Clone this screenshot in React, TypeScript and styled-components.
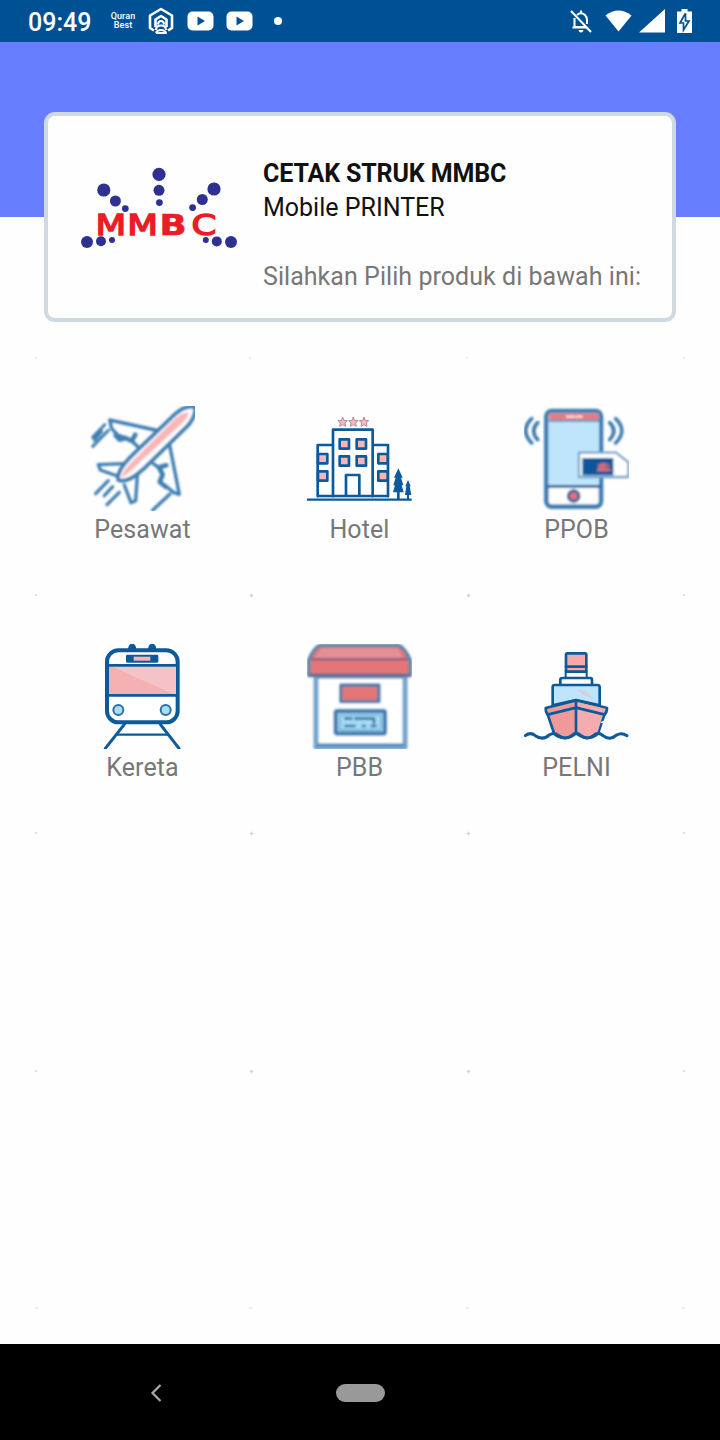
import React from "react";
import styled, { createGlobalStyle } from "styled-components";

const NAVY = "#0b5a9b";
const STEEL = "#3f7fb2";
const PINK = "#f7b6b6";
const SKY = "#bfe5fa";

const GlobalStyle = createGlobalStyle`
  * { box-sizing: border-box; }
  body { margin: 0; background: #fefefe; font-family: Roboto, "Noto Sans", sans-serif; }
`;

const Screen = styled.div`
  width: 720px;
  height: 1440px;
  display: flex;
  flex-direction: column;
  overflow: hidden;
  background: #fefefe;
`;

const StatusBar = styled.header`
  height: 42px;
  flex: none;
  display: flex;
  align-items: center;
  justify-content: space-between;
  padding: 0 28px;
  background: #005193;
  color: #fff;
`;

const StatusGroup = styled.div<{ $gap: number }>`
  display: flex;
  align-items: center;
  gap: ${(p) => p.$gap}px;
  svg { display: block; flex: none; }
`;

const Clock = styled.span`
  width: 63px;
  height: 42px;
  font-size: 25px;
  font-weight: 500;
  line-height: 45px;
  white-space: nowrap;
`;

const QuranBadge = styled.span`
  display: flex;
  flex-direction: column;
  align-items: center;
  width: 26px;
  margin: 0 11px 0 7px;
  font: 500 9px/9px Roboto, sans-serif;
  letter-spacing: 0.1px;
`;

const AppMark = styled.svg`
  margin-left: -11px;
  margin-right: 1px;
`;

const Signal = styled.svg`
  margin-left: -5px;
`;

const Dot = styled.span`
  width: 8px;
  height: 8px;
  margin-left: 9px;
  border-radius: 50%;
  background: #fff;
`;

const Banner = styled.div`
  height: 175px;
  flex: none;
  background: #667eff;
`;

const InfoCard = styled.section`
  position: relative;
  flex: none;
  display: flex;
  height: 210px;
  margin: -105px 44px 0;
  padding: 40px 0 0 28px;
  border: 4px solid #cfdae0;
  border-radius: 11px;
  background: #fefefe;
`;

const CardText = styled.div`
  display: flex;
  flex-direction: column;
  margin: 1px 0 0 19px;
  white-space: nowrap;
`;

const Line = styled.p<{ $color: string; $bold?: boolean; $gap?: number; $track?: number }>`
  margin: ${(p) => p.$gap ?? 0}px 0 0;
  font-size: 25px;
  line-height: 34px;
  font-weight: ${(p) => (p.$bold ? 700 : 400)};
  letter-spacing: ${(p) => p.$track ?? 0}px;
  color: ${(p) => p.$color};
`;

const Grid = styled.main`
  flex: 1;
  min-height: 0;
  display: grid;
  grid-template-columns: repeat(3, 217px);
  grid-template-rows: repeat(4, 238px);
  grid-auto-rows: 2px;
  align-content: start;
  padding: 35px 35px 0 34px;
`;

const Tile = styled.div`
  position: relative;
  display: flex;
  flex-direction: column;
  align-items: center;
  padding-top: 49px;
  &::before, &:nth-child(3n)::after {
    content: "";
    position: absolute;
    top: -2px;
    left: -2px;
    width: 5px;
    height: 5px;
    background:
      linear-gradient(#d4d4d4, #d4d4d4) 2px 1px / 1px 3px no-repeat,
      linear-gradient(#d4d4d4, #d4d4d4) 1px 2px / 3px 1px no-repeat,
      linear-gradient(#ececec, #ececec) 0 2px / 5px 1px no-repeat,
      linear-gradient(#ececec, #ececec) 2px 0 / 1px 5px no-repeat,
      linear-gradient(#f0f0f0, #f0f0f0) 1px 1px / 3px 3px no-repeat;
  }
  &:nth-child(3n + 1)::before, &:nth-child(3n)::after {
    left: 1px;
    width: 2px;
    background: #dedede;
    height: 2px;
    top: -1px;
  }
  &:nth-child(3n)::after { left: auto; right: 0; }
  &:nth-child(-n + 3)::before, &:nth-child(-n + 3)::after {
    height: 2px;
    width: 2px;
    top: 0;
    background: #eeeeee;
  }
`;

const TileLabel = styled.span`
  margin-top: 3px;
  font-size: 25px;
  line-height: 32px;
  letter-spacing: 0.1px;
  color: #777;
`;

const GridEnd = styled(Tile)`
  height: 2px;
  padding: 0;
  &&::before, &&::after {
    top: -2px;
    width: 3px;
    height: 2px;
    background: #ececec;
  }
`;

const NavBar = styled.footer`
  height: 96px;
  flex: none;
  display: flex;
  align-items: center;
  padding: 1px 0 0 149px;
  background: #000;
`;

const HomePill = styled.span`
  width: 49px;
  height: 18px;
  margin-left: 173px;
  border-radius: 9px;
  background: #999;
`;

function Art({ top, soft, children }: { top: number; soft?: boolean; children: React.ReactNode }) {
  return (
    <svg width="105" height="105" viewBox={`31 ${top} 315 315`} fill="none" strokeLinejoin="round" strokeLinecap="round">
      <defs>
        <filter id="soft" x="-5%" y="-5%" width="110%" height="110%">
          <feGaussianBlur stdDeviation="2.8" />
        </filter>
      </defs>
      <g filter={soft ? "url(#soft)" : undefined}>{children}</g>
    </svg>
  );
}

const Plane = () => (
  <Art top={32} soft>
    <g stroke={STEEL} strokeWidth="10">
      <path d="M240 107L90 74L96 100L114 119L140 128M160 140L178 158" />
      <path d="M108 120L120 133L137 128L156 137L167 118" strokeWidth="14" />
      <path d="M75 88L39 126M86 105L39 153M66 108L44 134" strokeWidth="9" />
      <path d="M269 145L299 297L283 292L258 272M237 217L221 205" />
      <path d="M260 210L238 216L249 238L240 260L259 275" strokeWidth="14" />
      <path d="M135 205L56 208L62 224L113 242M134 269L154 322L168 316L173 240" />
      <path d="M86 256L48 295M99 274L74 301M119 291L82 328M271 296L219 345" />
      <path d="M116 254C111 232 130 207 160 178L288 55Q320 28 346 36Q349 62 325 90L190 222Q143 265 116 254Z" fill="#fff" strokeWidth="12" />
    </g>
    <path d="M125 247Q129 224 169 187L286 71Q308 51 325 51Q332 59 309 82L178 203Q146 236 125 247Z" fill="#f9b5b6" />
  </Art>
);

const HOTEL_WINDOWS = [[127, 130], [178, 130], [127, 181], [178, 181], [62, 174], [62, 226], [243, 174], [243, 226]];

const Hotel = () => (
  <Art top={32}>
    <g stroke={NAVY} strokeWidth="8">
      <path d="M31 313H342" strokeWidth="7" />
      <path d="M63 303V149H108M229 149H274V303M109 303V103H228V303M63 302H274M148 300V239H188V300" />
      {HOTEL_WINDOWS.map(([x, y]) => (
        <rect key={`${x}-${y}`} x={x + 2} y={y + 2} width="28" height="28" fill={PINK} />
      ))}
    </g>
    <path d="M305 219L318 247H313L320 270H315L321 291H309V312H301V291H289L295 270H290L297 247H292ZM334 254L342 273H339L344 299H337V312H331V299H325L329 273H326Z" fill={NAVY} />
    {[138, 170, 202].map((x) => (
      <path key={x} transform={`translate(${x} 80)`} d="M0 -14L4 -5L14 -4L7 3L9 13L0 8L-9 13L-7 3L-14 -4L-4 -5Z" fill="#f6b9bb" stroke="#b58b9b" strokeWidth="3" />
    ))}
  </Art>
);

const Phone = () => (
  <Art top={32} soft>
    <rect x="98" y="47" width="164" height="287" rx="16" fill="#fff" stroke={STEEL} strokeWidth="14" />
    <path d="M105 76H256V273H105Z" fill={SKY} />
    <path d="M107 54H255V75H107Z" fill="#e07d86" />
    <path d="M107 77H255" stroke={STEEL} strokeWidth="5" />
    <path d="M160 64H182M190 64H204" stroke="#fbdfe2" strokeWidth="7" />
    <path d="M104 273H257" stroke={NAVY} strokeWidth="8" />
    <circle cx="180" cy="302" r="16" fill="#e7717a" stroke="#286195" strokeWidth="9" />
    <g stroke={STEEL} strokeWidth="11">
      <path d="M54 70Q18 106 54 143M72 82Q48 106 72 133" />
      <path d="M306 70Q343 106 306 143M288 82Q313 106 288 133" />
    </g>
    <path d="M196 172H307L344 201V245H196Z" fill="#fff" stroke="#75a3c8" strokeWidth="7" />
    <path d="M206 188H299V240H206Z" fill="#105799" />
    <path d="M253 205H288V225H253Z" fill="#9d6182" />
    <path d="M255 224L265 205M267 224L274 205M253 225H288" stroke="#df707d" strokeWidth="6" />
  </Art>
);

const Train = () => (
  <Art top={27}>
    <path d="M145 42Q147 26 158 26Q168 26 170 42M205 42Q207 26 218 26Q228 26 230 42" fill={NAVY} />
    <rect x="82" y="46" width="212" height="216" rx="34" fill="#fff" stroke={NAVY} strokeWidth="12" />
    <path d="M88 94H289V180H88Z" fill="#f5b1b2" />
    <path d="M88 94H289V180L100 97Z" fill="#f5c3c7" />
    <path d="M88 91H289M88 181H289" stroke={NAVY} strokeWidth="8" />
    <rect x="139" y="59" width="97" height="24" rx="4" fill={NAVY} />
    <rect x="162" y="65" width="50" height="12" fill={PINK} />
    <g fill="#a9dcf8" stroke="#2d70a7" strokeWidth="6">
      <circle cx="116" cy="225" r="15" />
      <circle cx="258" cy="225" r="15" />
    </g>
    <g stroke={NAVY} strokeWidth="9">
      <path d="M134 268L77 340M242 268L298 340" />
      <path d="M113 299H264" strokeWidth="7" />
    </g>
  </Art>
);

const Kiosk = () => (
  <Art top={27} soft>
    <path d="M58 117H325V337H58Z" fill="#fff" stroke="#71a4cc" strokeWidth="15" />
    <path d="M65 127H317M64 329H318" stroke={STEEL} strokeWidth="7" />
    <path d="M72 31H304Q322 34 341 76V121H36V76Q54 34 72 31Z" fill="#e47477" stroke="#6088ab" strokeWidth="11" />
    <path d="M74 39H303L319 68H55Z" fill="#e49093" />
    <path d="M47 73H331M38 121H340" stroke="#765f88" strokeWidth="6" />
    <path d="M132 150H247V200H132Z" fill="#e47477" stroke="#477eab" strokeWidth="10" />
    <rect x="117" y="228" width="148" height="68" rx="5" fill="#a8d9f3" stroke={STEEL} strokeWidth="13" />
    <path d="M131 241H252V285H131Z" stroke="#6daed5" strokeWidth="4" />
    <path d="M146 251H164M176 251H232M232 251V264M146 273H174M198 273H205M224 273H237" stroke="#347bad" strokeWidth="8" />
  </Art>
);

const Ship = () => (
  <Art top={27}>
    <g stroke={NAVY} strokeWidth="8">
      <rect x="157" y="55" width="61" height="75" rx="4" fill="#f4aaaa" />
      <path d="M159 112H216V128H159Z" fill="#fff" stroke="none" />
      <path d="M157 95H218M157 110H218" />
      <path d="M140 150V134Q140 129 146 129H230Q235 129 235 135V150" fill="#fff" />
      <path d="M117 211V156Q117 150 123 150H251Q258 150 258 156V211L187 195Z" fill={SKY} />
      <path d="M190 166H215L237 192L213 182Z" fill="#d7ced9" stroke="none" />
      <path d="M96 219L187 196L280 219Q280 233 272 239L253 296Q237 309 222 309Q204 309 187 295Q173 309 153 309Q136 309 122 297L102 239Q95 230 96 219Z" fill="#f0999a" />
      <path d="M190 201L276 221L268 239L251 293Q235 306 220 304L190 290Z" fill="#f5acae" stroke="none" />
      <path d="M187 197V293M102 239L187 218L273 239" />
      <path d="M35 302Q50 290 65 302Q88 318 108 299Q121 290 137 303Q155 316 174 302Q187 288 202 302Q220 316 239 302Q254 288 268 302Q288 318 309 300Q324 291 340 302" strokeWidth="9" />
    </g>
    <path d="M265 262L274 259" stroke="#fff" strokeWidth="6" />
  </Art>
);

const LOGO_DOTS = [
  [89, 19.4, 6.6], [89, 35.3, 5.5], [89.4, 47.6, 3.4],
  [33.8, 35, 6.6], [45.4, 46, 5.5], [55.3, 53.6, 3.4],
  [144, 34, 6.6], [132.3, 44.5, 5.5], [122.6, 52.6, 3.4],
  [17, 87, 6], [31, 86.2, 5], [42, 85, 3],
  [161, 87, 6], [146.8, 86.4, 5], [135.8, 85, 3],
];

const Logo = () => (
  <svg width="168" height="100" viewBox="6 0 168 100">
    {LOGO_DOTS.map(([x, y, r]) => (
      <circle key={`${x}-${y}`} cx={x} cy={y} r={r} fill="#2e3192" />
    ))}
    <g transform="scale(1.27 1)" fill="#ed1c24" stroke="#ed1c24" strokeWidth="1.4" fontFamily="DejaVu Sans" fontSize="28">
      <text y="80" x="20 45 70.5 95.7">
        MM<tspan fontWeight="700" strokeWidth="0.6">B</tspan>C
      </text>
    </g>
  </svg>
);

const LogoSlot = styled.div`
  width: 168px;
  height: 100px;
  margin-top: -1px;
`;

const Video = () => (
  <svg width="27" height="20" viewBox="0 0 27 20">
    <rect x="0.5" y="0.5" width="26" height="19" rx="5" fill="#fff" />
    <path d="M10.5 5.5L18 10L10.5 14.5Z" fill="#005193" />
  </svg>
);

const PRODUCTS = [
  { name: "Pesawat", Icon: Plane },
  { name: "Hotel", Icon: Hotel },
  { name: "PPOB", Icon: Phone },
  { name: "Kereta", Icon: Train },
  { name: "PBB", Icon: Kiosk },
  { name: "PELNI", Icon: Ship },
];

const SPARE_SLOTS = [0, 1, 2, 3, 4, 5];

export default function App() {
  return (
    <Screen>
      <GlobalStyle />
      <StatusBar>
        <StatusGroup $gap={12}>
          <Clock>09:49</Clock>
          <StatusGroup $gap={12}>
            <QuranBadge>
              <span>Quran</span>
              <span>Best</span>
            </QuranBadge>
            <AppMark width="26" height="28" viewBox="0 0 26 28" fill="none" stroke="#fff" strokeWidth="2.6" strokeLinejoin="round">
              <path d="M6 23.5L2 21V8.5L13 2L24 8.5V21L20 23.5" />
              <path d="M7.5 20V12.5L13 9L18.5 12.5V20" />
              <path d="M10 17.5Q10 14 13 14Q16 14 16 17.5M8 23Q8 18.5 13 18.5Q18 18.5 18 23M8 26Q9 23 13 23Q17 23 18 26H8" strokeWidth="2" />
            </AppMark>
            <Video />
            <Video />
            <Dot />
          </StatusGroup>
        </StatusGroup>
        <StatusGroup $gap={12}>
          <svg width="24" height="24" viewBox="0 0 24 24" fill="none" stroke="#fff" strokeWidth="2">
            <path d="M2 2L22 23" />
            <path d="M5.5 9V18H17M8 6Q12 2.5 16 6Q18 8 18 11V15M3.5 18.5H18M12 1.5V5" />
            <path d="M9.5 21H14.5Q14 23.5 12 23.5Q10 23.5 9.5 21Z" fill="#fff" stroke="none" />
          </svg>
          <svg width="27" height="22" viewBox="0 0 27 22">
            <path d="M0.5 5.5Q13.5 -4.5 26.5 5.5L13.5 21.5Z" fill="#fff" />
          </svg>
          <Signal width="26" height="24" viewBox="0 0 26 24">
            <path d="M0 23.5L26 0V23.5Z" fill="#fff" />
          </Signal>
          <svg width="15" height="24" viewBox="0 0 15 24">
            <path d="M4.5 0H10.5V2.5H15V24H0V2.5H4.5Z" fill="#fff" />
            <path d="M8 5L3 14H6.5V21L12 12H8.5V5Z" fill="#fff" stroke="#005193" strokeWidth="1.7" />
          </svg>
        </StatusGroup>
      </StatusBar>
      <Banner />
      <InfoCard>
        <LogoSlot><Logo /></LogoSlot>
        <CardText>
          <Line $color="#111" $bold $track={-0.13}>CETAK STRUK MMBC</Line>
          <Line $color="#111">Mobile PRINTER</Line>
          <Line $color="#777" $gap={35} $track={0.05}>Silahkan Pilih produk di bawah ini:</Line>
        </CardText>
      </InfoCard>
      <Grid>
        {PRODUCTS.map(({ name, Icon }) => (
          <Tile key={name}>
            <Icon />
            <TileLabel>{name}</TileLabel>
          </Tile>
        ))}
        {SPARE_SLOTS.map((slot) => (
          <Tile key={slot} />
        ))}
        <GridEnd />
        <GridEnd />
        <GridEnd />
      </Grid>
      <NavBar>
        <svg width="14" height="20" viewBox="0 0 14 20" fill="none" stroke="#aaa" strokeWidth="2.2">
          <path d="M11.5 2L3.5 10L11.5 18" />
        </svg>
        <HomePill />
      </NavBar>
    </Screen>
  );
}
